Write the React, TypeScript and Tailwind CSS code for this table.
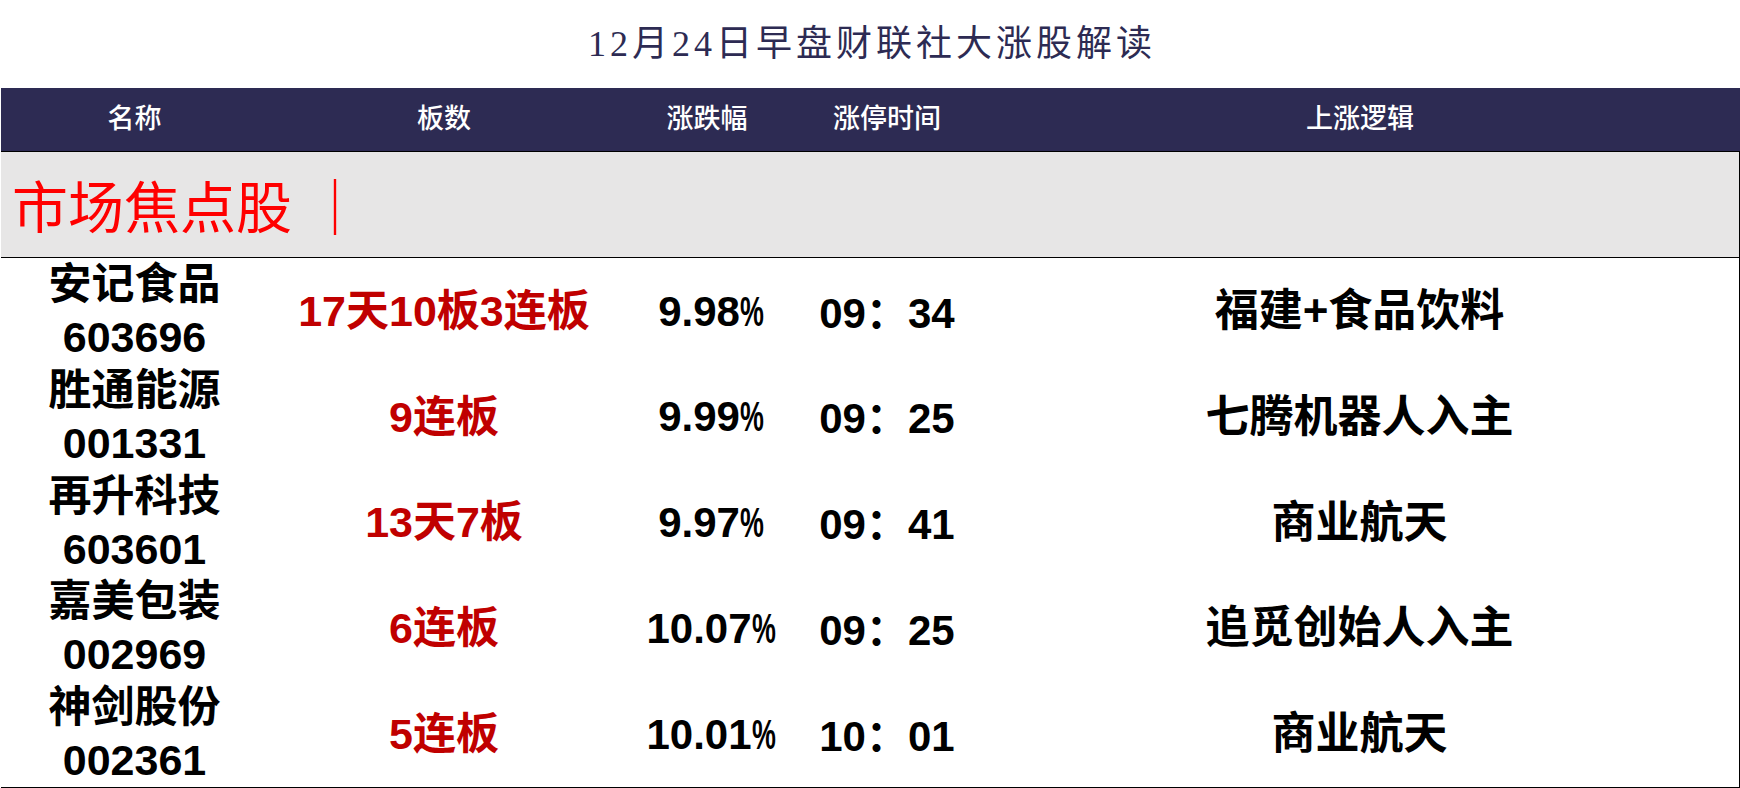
// Morning limit-up review: a title, a navy header row, a grey section banner
// and five stock rows laid out in a fixed column grid.

type Stock = {
  name: string;
  code: string;
  boards: string;
  change: string;
  time: [string, string];
  logic: string;
};

const stocks: Stock[] = [
  { name: "安记食品", code: "603696", boards: "17天10板3连板", change: "9.98", time: ["09", "34"], logic: "福建+食品饮料" },
  { name: "胜通能源", code: "001331", boards: "9连板", change: "9.99", time: ["09", "25"], logic: "七腾机器人入主" },
  { name: "再升科技", code: "603601", boards: "13天7板", change: "9.97", time: ["09", "41"], logic: "商业航天" },
  { name: "嘉美包装", code: "002969", boards: "6连板", change: "10.07", time: ["09", "25"], logic: "追觅创始人入主" },
  { name: "神剑股份", code: "002361", boards: "5连板", change: "10.01", time: ["10", "01"], logic: "商业航天" },
];

const cols = "grid grid-cols-[267px_352px_174px_186px_1fr]";
const sans = "font-['Liberation_Sans','Noto_Sans_CJK_SC',sans-serif]";

function Percent({ value }: { value: string }) {
  return (
    <span>
      {value}
      <span className="inline-block w-[24px] text-left">
        <span className="inline-block origin-left scale-x-[0.64]">%</span>
      </span>
    </span>
  );
}

export default function App() {
  return (
    <div className={`h-[788px] w-[1740px] overflow-hidden bg-white ${sans}`}>
      <div className="flex h-[88px] items-center justify-center pl-[4px]">
        <h1 className="font-['Liberation_Serif','Noto_Sans_CJK_SC',serif] text-[36px] font-normal tracking-[4px] text-[#2d2b53]">
          12月24日早盘财联社大涨股解读
        </h1>
      </div>

      <div className={`${cols} ml-px h-[63px] items-center bg-[#2d2b53] text-[27px] font-medium text-white`}>
        <div className="text-center">名称</div>
        <div className="text-center">板数</div>
        <div className="text-center">涨跌幅</div>
        <div className="text-center">涨停时间</div>
        <div className="text-center">上涨逻辑</div>
      </div>

      <div className="ml-px flex h-[107px] items-center border-y border-r border-black bg-[#e7e6e6] pl-[11px] pt-[8px]">
        <span className="font-['Liberation_Serif','Noto_Sans_CJK_SC',serif] text-[56px] leading-none text-[#ff0000]">
          市场焦点股<span className="ml-[1px]"> ｜</span>
        </span>
      </div>

      <div className="ml-px grid h-[530px] grid-rows-5 border-r border-b border-black">
        {stocks.map((s) => (
          <div key={s.code} className={`${cols} items-center font-bold text-black`}>
            <div className="flex flex-col items-center text-[43px] leading-[53px]">
              <span>{s.name}</span>
              <span>{s.code}</span>
            </div>
            <div className="text-center text-[43px] text-[#c00000]">{s.boards}</div>
            <div className="pl-[8px] text-center text-[42px]">
              <Percent value={s.change} />
            </div>
            <div className="text-center text-[42px]">
              {s.time[0]}
              <span className="font-['Noto_Sans_CJK_SC']">：</span>
              {s.time[1]}
            </div>
            <div className="text-center text-[44px]">{s.logic}</div>
          </div>
        ))}
      </div>
    </div>
  );
}
